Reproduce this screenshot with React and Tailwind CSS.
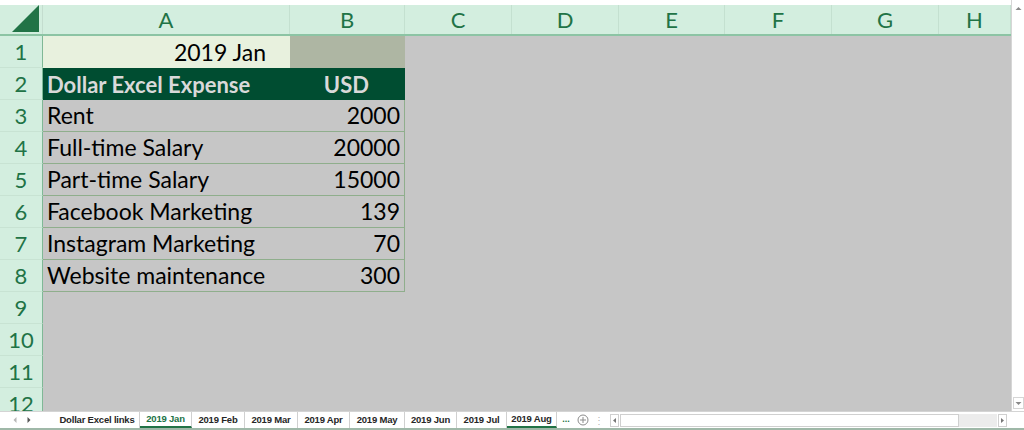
import React from "react";

const cols = [
  { l: "A", w: "w-[247px]" },
  { l: "B", w: "w-[115px]" },
  { l: "C", w: "w-[107px]" },
  { l: "D", w: "w-[107px]" },
  { l: "E", w: "w-[106px]" },
  { l: "F", w: "w-[107px]" },
  { l: "G", w: "w-[107px]" },
  { l: "H", w: "flex-1" },
];

const data = [
  ["Rent", "2000"],
  ["Full-time Salary", "20000"],
  ["Part-time Salary", "15000"],
  ["Facebook Marketing", "139"],
  ["Instagram Marketing", "70"],
  ["Website maintenance", "300"],
];

const tabs = [
  { t: "Dollar Excel links", w: "w-[85px]" },
  { t: "2019 Jan", w: "w-[52px]", active: true },
  { t: "2019 Feb", w: "w-[53px]" },
  { t: "2019 Mar", w: "w-[53px]" },
  { t: "2019 Apr", w: "w-[52px]" },
  { t: "2019 May", w: "w-[55px]" },
  { t: "2019 Jun", w: "w-[52px]" },
  { t: "2019 Jul", w: "w-[50px]" },
  { t: "2019 Aug", w: "w-[50px]", under: true },
];

function RowHead({ n }) {
  return (
    <div className="w-[43px] h-[32px] shrink-0 flex items-center justify-center border-r border-r-[#7fb896] border-b border-b-[#c8e3d3] bg-[#d3eedf] text-[#217346] text-[22px]">
      {n}
    </div>
  );
}

export default function App() {
  return (
    <div className="w-[1024px] h-[430px] overflow-hidden bg-white flex flex-col" style={{ fontFamily: "Lato, 'Liberation Sans', sans-serif" }}>
      <div className="flex flex-1 min-h-0">
        <div className="flex-1 flex flex-col min-w-0 pt-[5px] overflow-hidden">
          {/* column header */}
          <div className="flex h-[31px] shrink-0 bg-[#d3eedf] border-b-2 border-b-[#8cc4a4]">
            <div className="w-[43px] shrink-0 flex items-end justify-end pr-[2px] pb-[1px] border-r border-r-[#c4ddcf]">
              <svg width="28" height="28" viewBox="0 0 28 28"><polygon points="27,0 27,27 0,27" fill="#217346" /></svg>
            </div>
            {cols.map((c) => (
              <div key={c.l} className={`${c.w} shrink-0 flex items-center justify-center border-r border-r-[#c4e0d0] text-[#217346] text-[22px]`}>
                {c.l}
              </div>
            ))}
          </div>
          {/* rows */}
          <div className="flex-1 bg-[#c6c6c6] flex flex-col overflow-hidden">
            <div className="flex shrink-0">
              <RowHead n={1} />
              <div className="w-[247px] h-[32px] bg-[#e8f1de] flex items-center justify-end pr-[24px] text-[23px] text-black">2019 Jan</div>
              <div className="w-[115px] h-[32px] bg-[#aeb6a3]" />
            </div>
            <div className="flex shrink-0">
              <RowHead n={2} />
              <div className="w-[247px] h-[32px] bg-[#004d31] flex items-center pl-[4px] text-[22px] font-bold text-[#d9d9d9] whitespace-nowrap">Dollar Excel Expense</div>
              <div className="w-[115px] h-[32px] bg-[#004d31] flex items-center justify-end pr-[36px] text-[22px] font-bold text-[#d9d9d9]">USD</div>
            </div>
            {data.map(([a, b], i) => (
              <div key={a} className="flex shrink-0">
                <RowHead n={i + 3} />
                <div className="w-[247px] h-[32px] flex items-center pl-[4px] text-[23px] text-black border-b border-b-[#8fae8c] whitespace-nowrap">{a}</div>
                <div className="w-[115px] h-[32px] flex items-center justify-end pr-[4px] text-[23px] text-black border-b border-b-[#8fae8c] border-r border-r-[#8fae8c]">{b}</div>
              </div>
            ))}
            {[9, 10, 11, 12].map((n) => (
              <div key={n} className="flex shrink-0">
                <RowHead n={n} />
              </div>
            ))}
          </div>
        </div>
        {/* vertical scrollbar */}
        <div className="w-[13px] shrink-0 bg-white border-l border-l-[#d6d6d6] flex flex-col items-center justify-between pt-[6px] pb-[2px]">
          <svg width="7" height="5" viewBox="0 0 7 5"><polygon points="0.5,4 6.5,4 3.5,1" fill="#8a8a8a" /></svg>
          <div className="w-[11px] h-[12px] border border-[#d6d6d6] flex items-center justify-center">
            <svg width="7" height="5" viewBox="0 0 7 5"><polygon points="0.5,1 6.5,1 3.5,4" fill="#8a8a8a" /></svg>
          </div>
        </div>
      </div>
      {/* tab bar */}
      <div className="h-[19px] shrink-0 flex items-stretch bg-white border-t border-t-[#d4d4d4] border-b-2 border-b-[#9fb8a8]" style={{ fontFamily: "'Liberation Sans', Arial, sans-serif" }}>
        <div className="w-[55px] shrink-0 flex items-center gap-[10px] pl-[13px]">
          <svg width="4" height="6" viewBox="0 0 4 6"><polygon points="3.5,0 3.5,6 0.5,3" fill="#b8b8b8" /></svg>
          <svg width="4" height="6" viewBox="0 0 4 6"><polygon points="0.5,0 0.5,6 3.5,3" fill="#555" /></svg>
        </div>
        {tabs.map(({ t, w, active, under }) => (
          <div
            key={t}
            className={`${w} shrink-0 flex items-center justify-center text-[9.5px] font-bold whitespace-nowrap tracking-[-0.2px] border-r border-r-[#d0d0d0] ${active ? "text-[#217346] border-b-2 border-b-[#217346] bg-white" : "text-[#262626]"} ${under ? "border-b-2 border-b-[#217346]" : ""}`}
          >
            {t}
          </div>
        ))}
        <div className="w-[18px] shrink-0 flex items-center justify-center text-[9px] font-bold text-[#217346]">...</div>
        <div className="w-[16px] shrink-0 flex items-center justify-center">
          <svg width="12" height="12" viewBox="0 0 12 12"><circle cx="6" cy="6" r="5" fill="none" stroke="#8c8c8c" /><path d="M6 3v6M3 6h6" stroke="#8c8c8c" /></svg>
        </div>
        <div className="w-[16px] shrink-0 flex items-center justify-center text-[10px] text-[#b5b5b5]">⋮</div>
        <div className="flex-1 flex items-center pl-[3px] pr-[3px] gap-0">
          <div className="w-[9px] h-[13px] border border-[#d0d0d0] flex items-center justify-center mr-[1px]">
            <svg width="3" height="5" viewBox="0 0 3 5"><polygon points="3,0 3,5 0,2.5" fill="#777" /></svg>
          </div>
          <div className="w-[339px] h-[13px] bg-white border border-[#d0d0d0]" />
          <div className="flex-1 h-[13px] bg-[#ececec]" />
          <div className="w-[9px] h-[13px] border border-[#d0d0d0] flex items-center justify-center ml-[1px]">
            <svg width="3" height="5" viewBox="0 0 3 5"><polygon points="0,0 0,5 3,2.5" fill="#777" /></svg>
          </div>
          <div className="w-[14px]" />
        </div>
      </div>
    </div>
  );
}
